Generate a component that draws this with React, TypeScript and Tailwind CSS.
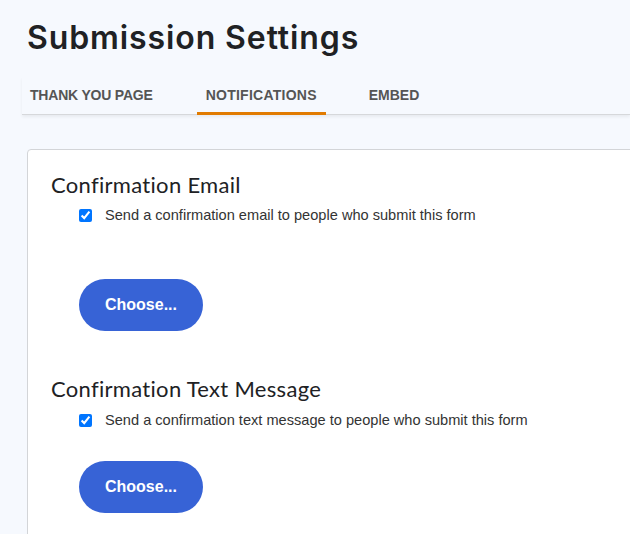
import { useState } from 'react'

const tabs = [
  { name: 'THANK YOU PAGE', cls: 'px-[8px] tracking-[-0.2px]' },
  { name: 'NOTIFICATIONS', cls: 'ml-[36px] w-[129px] text-center tracking-[0.25px]' },
  { name: 'EMBED', cls: 'ml-[34px] px-[9px] tracking-[0px]' },
]

function Section({
  title,
  label,
  checkGap,
  buttonGap,
}: {
  title: string
  label: string
  checkGap: string
  buttonGap: string
}) {
  const [checked, setChecked] = useState(true)
  return (
    <section className="flex flex-col">
      <h2 className="font-['Lato',sans-serif] text-[22px] leading-[28px] tracking-[0.3px] text-[#202124]">{title}</h2>
      <label className={`${checkGap} ml-[28px] flex items-center gap-[13px] font-['Liberation_Sans',Arial,sans-serif] text-[14.6px] leading-[18px] text-[#333]`}>
        <input
          type="checkbox"
          checked={checked}
          onChange={(e) => setChecked(e.target.checked)}
          className="m-0 h-[13px] w-[13px] accent-[#0075ff]"
        />
        {label}
      </label>
      <button
        className={`${buttonGap} ml-[28px] h-[52px] w-[124px] rounded-full bg-[#3763d6] font-['Liberation_Sans',Arial,sans-serif] text-[16px] font-bold text-white`}
      >
        Choose...
      </button>
    </section>
  )
}

export default function App() {
  const active = 'NOTIFICATIONS'
  return (
    <div className="h-[534px] w-[630px] overflow-hidden bg-[#f6f9fe]">
      <h1 className="pl-[27px] pt-[17px] font-['Inter',sans-serif] text-[32px] font-semibold leading-[42px] tracking-[0.9px] text-[#202124]">
        Submission Settings
      </h1>
      <nav className="ml-[22px] mt-[18px] flex border-b border-[#d6d8db] shadow-[0_2px_3px_rgba(0,0,0,0.06)]">
        {tabs.map((t) => (
          <div
            key={t.name}
            className={`${t.cls} pt-[9px] pb-[7px] font-['Liberation_Sans',Arial,sans-serif] text-[14px] leading-[19px] font-bold text-[#555] border-b-[3px] -mb-px ${
              t.name === active ? 'border-[#e17b00]' : 'border-transparent'
            }`}
          >
            {t.name}
          </div>
        ))}
      </nav>
      <div className="ml-[27px] mt-[34px] w-[640px] rounded-[4px] border border-[#d3d5d8] bg-white pl-[23px] pt-[21px] pb-10">
        <Section
          title="Confirmation Email"
          label="Send a confirmation email to people who submit this form"
          checkGap="mt-[7px]"
          buttonGap="mt-[55px]"
        />
        <div className="mt-[44px]">
          <Section
            title="Confirmation Text Message"
            label="Send a confirmation text message to people who submit this form"
            checkGap="mt-[8px]"
            buttonGap="mt-[32px]"
          />
        </div>
      </div>
    </div>
  )
}
